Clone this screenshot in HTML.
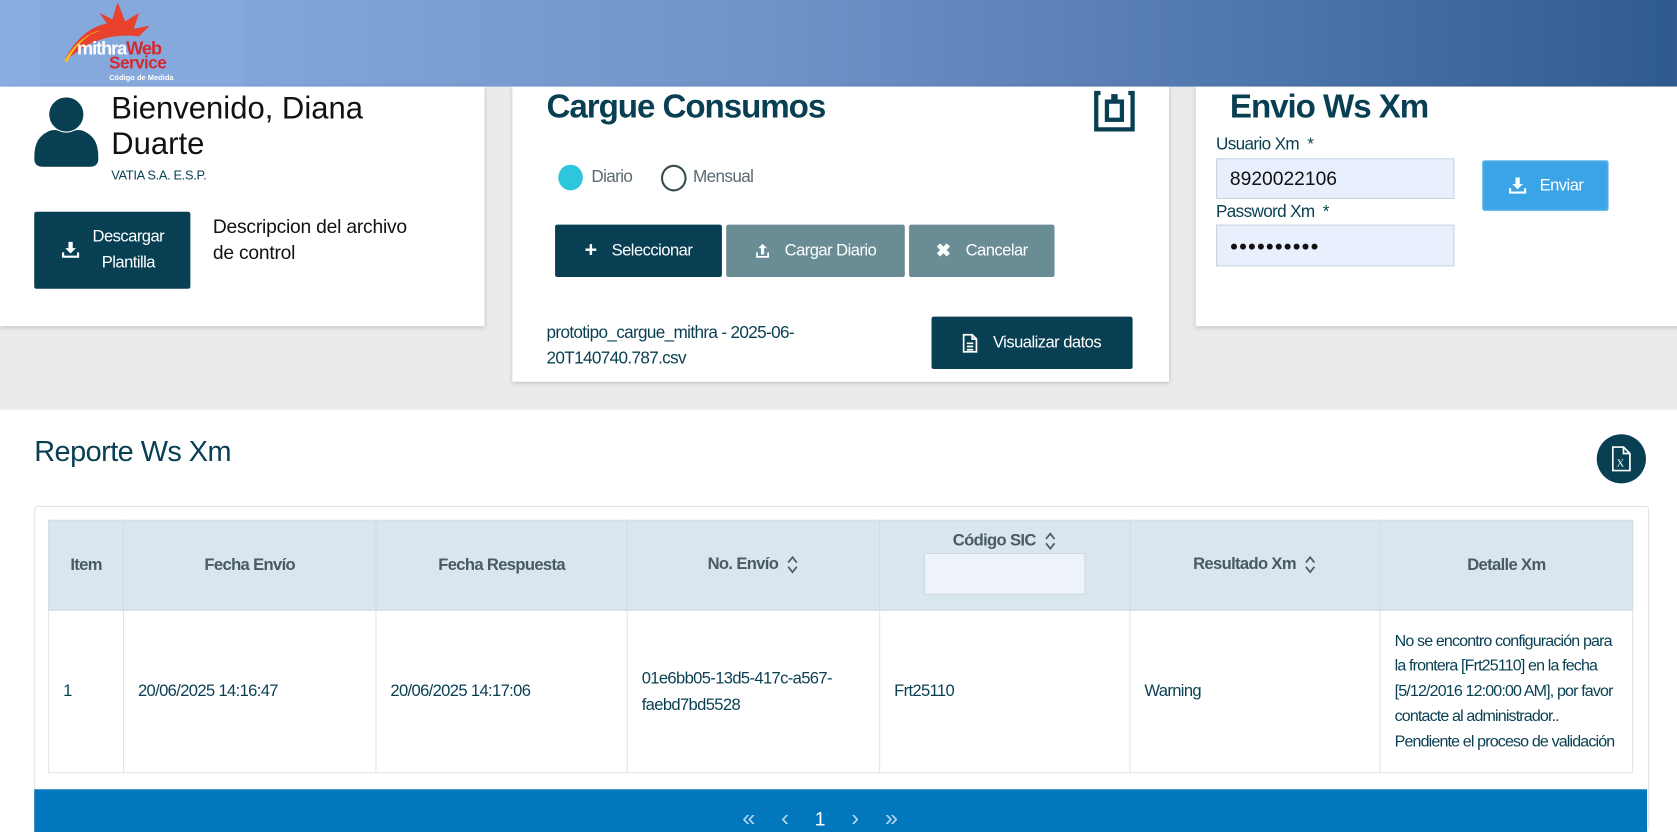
<!DOCTYPE html>
<html><head><meta charset="utf-8">
<style>
html,body{margin:0;padding:0;width:1677px;height:822px;overflow:hidden;background:#fff;}
#w{position:absolute;left:0;top:0;width:1568px;height:769px;transform:scale(1.0695);transform-origin:0 0;font-family:"Liberation Sans",sans-serif;}
.a{position:absolute;}
.n{letter-spacing:-0.6px;}
.card{position:absolute;background:#fff;box-shadow:0 1px 4px rgba(0,0,0,.2);}
.btn{position:absolute;color:#fff;font-size:15.5px;letter-spacing:-0.5px;display:flex;align-items:center;justify-content:center;border-radius:2px;}
.dk{background:#083f52;}
.gr{background:#6a8c95;}
table{border-collapse:collapse;position:absolute;left:45px;top:486px;width:1482px;table-layout:fixed;}
th{background:#dae6ee;color:#4a5a62;font-size:15.5px;letter-spacing:-0.6px;font-weight:bold;height:84px;padding:0;border:1px solid #cfdbe3;box-sizing:border-box;}
td{border:1px solid #dfe6ea;color:#083f52;font-size:15.5px;letter-spacing:-0.6px;height:152px;padding:0 13px;overflow:hidden;box-sizing:border-box;}
</style></head><body>
<div id="w">
<div class="a" style="left:0;top:81px;width:1568px;height:302px;background:#ebebeb"></div>
<div class="a" style="left:0;top:0;width:1568px;height:81px;background:linear-gradient(90deg,#89aee2 0%,#6f94c8 45%,#4f76ad 75%,#2f5a90 100%)"></div>
<div class="a" style="left:37px;top:0;width:190px;height:81px;background:#85a9dd"></div>
<svg class="a" style="left:55px;top:2px" width="130" height="60" viewBox="0 0 130 60">
<path d="M5 55 Q20 25 45 20 L38 10 L50 16 L55 0 L62 18 L75 10 L70 25 L85 22 L75 32 Q40 28 15 48 Z" fill="#e8412c"/>
<path d="M5 55 Q20 30 40 26 L30 30 Q15 40 8 56Z" fill="#f4c21b"/>
</svg>
<div class="a" style="left:72px;top:36px;font:bold 17px 'Liberation Sans',sans-serif;color:#fff;letter-spacing:-1px">mithra<span style="color:#d22a2f">Web</span></div>
<div class="a" style="left:102px;top:51px;font:bold 16px 'Liberation Sans',sans-serif;color:#d22a2f;letter-spacing:-0.5px">Service</div>
<div class="a" style="left:102px;top:70px;font:bold 7px 'Liberation Sans',sans-serif;color:#fff">Código de Medida</div>

<div class="card" style="left:0;top:81px;width:453px;height:224px"></div>
<svg class="a" style="left:32px;top:90px" width="60" height="66" viewBox="0 0 60 66"><circle cx="30" cy="17" r="16" fill="#083f52"/><path d="M6 38 Q14 30 22 32 Q30 36 38 32 Q46 30 54 38 Q60 44 60 58 Q60 66 52 66 L8 66 Q0 66 0 58 Q0 44 6 38Z" fill="#083f52"/></svg>
<div class="a" style="left:104px;top:86px;font-size:29px;line-height:33px;color:#111">Bienvenido, Diana<br>Duarte</div>
<div class="a" style="left:104px;top:157px;font-size:12px;color:#083f52;letter-spacing:-0.3px">VATIA S.A. E.S.P.</div>
<div class="btn dk" style="left:32px;top:198px;width:146px;height:72px;line-height:24px;text-align:center"><svg width="18" height="16" viewBox="0 0 18 16" style="margin-right:12px"><path d="M7 0h4v6h3l-5 5-5-5h3z M1 10v5h16v-5h-2v3H3v-3z" fill="#fff"/></svg><span>Descargar<br>Plantilla</span></div>
<div class="a" style="left:199px;top:200px;font-size:18px;line-height:24px;color:#111;letter-spacing:-0.2px">Descripcion del archivo<br>de control</div>

<div class="card" style="left:479px;top:81px;width:614px;height:276px"></div>
<div class="a" style="left:511px;top:82px;font-size:31px;font-weight:bold;color:#083f52;letter-spacing:-1px">Cargue Consumos</div>
<svg class="a" style="left:1022px;top:84px" width="40" height="40" viewBox="0 0 40 40"><path d="M7 3 H3 V37 H37 V3 H33" fill="none" stroke="#083f52" stroke-width="4"/><rect x="13" y="11" width="14" height="17" fill="none" stroke="#083f52" stroke-width="4"/><rect x="17" y="4" width="6" height="8" fill="#083f52"/></svg>
<div class="a" style="left:522px;top:154px;width:23px;height:24px;border-radius:50%;background:#2ec6dc"></div>
<div class="a n" style="left:553px;top:157px;font-size:16px;color:#5a6a72">Diario</div>
<div class="a" style="left:618px;top:154px;width:20px;height:21px;border-radius:50%;border:2px solid #3a4a52"></div>
<div class="a n" style="left:648px;top:157px;font-size:16px;color:#5a6a72">Mensual</div>
<div class="btn dk" style="left:519px;top:210px;width:156px;height:49px"><b style="font-size:20px;margin-right:14px">+</b>Seleccionar</div>
<div class="btn gr" style="left:679px;top:210px;width:167px;height:49px"><svg width="14" height="14" viewBox="0 0 14 14" style="margin-right:14px"><path d="M5.5 10V4H3l4-4 4 4H8.5v6z M1 8v5h12V8h-1.6v3.4H2.6V8z" fill="#fff"/></svg>Cargar Diario</div>
<div class="btn gr" style="left:850px;top:210px;width:136px;height:49px"><b style="font-size:17px;margin-right:14px">&#x2716;</b>Cancelar</div>
<div class="a n" style="left:511px;top:300px;font-size:16px;line-height:24px;color:#083f52">prototipo_cargue_mithra - 2025-06-<br>20T140740.787.csv</div>
<div class="btn dk" style="left:871px;top:296px;width:188px;height:49px"><svg width="14" height="18" viewBox="0 0 14 18" style="margin-right:14px"><path d="M1 1 H9 L13 5 V17 H1Z M9 1 V5 H13 M4 9 H10 M4 12 H10 M4 15 H10" fill="none" stroke="#fff" stroke-width="1.6"/></svg>Visualizar datos</div>

<div class="card" style="left:1118px;top:81px;width:460px;height:224px"></div>
<div class="a" style="left:1150px;top:82px;font-size:31px;font-weight:bold;color:#083f52;letter-spacing:-1px">Envio Ws Xm</div>
<div class="a n" style="left:1137px;top:127px;font-size:16px;color:#083f52">Usuario Xm &nbsp;*</div>
<div class="a" style="left:1137px;top:148px;width:221px;height:36px;background:#e8f0fe;border:1px solid #c9d3dc;font-size:18px;line-height:36px;text-indent:12px;color:#111">8920022106</div>
<div class="a n" style="left:1137px;top:190px;font-size:16px;color:#083f52">Password Xm &nbsp;*</div>
<div class="a" style="left:1137px;top:210px;width:221px;height:37px;background:#e8f0fe;border:1px solid #c9d3dc;font-size:13px;line-height:37px;text-indent:12px;color:#111;letter-spacing:0.5px">●●●●●●●●●●</div>
<div class="btn" style="left:1386px;top:150px;width:118px;height:47px;background:#3aa4e6;box-shadow:0 0 4px #6ab8ee inset"><svg width="18" height="16" viewBox="0 0 18 16" style="margin-right:12px"><path d="M7 0h4v6h3l-5 5-5-5h3z M1 10v5h16v-5h-2v3H3v-3z" fill="#fff"/></svg>Enviar</div>

<div class="a" style="left:32px;top:407px;font-size:27px;color:#083f52;letter-spacing:-0.5px">Reporte Ws Xm</div>
<div class="a" style="left:1493px;top:406px;width:46px;height:46px;border-radius:50%;background:#083f52"></div>
<svg class="a" style="left:1507px;top:417px" width="18" height="24" viewBox="0 0 18 24"><path d="M1 1 H11 L17 7 V23 H1Z M11 1 V7 H17" fill="none" stroke="#fff" stroke-width="1.6"/><text x="4.5" y="19" font-family="Liberation Serif" font-size="10" fill="#fff">X</text></svg>
<div class="a" style="left:32px;top:473px;width:1508px;height:300px;border:1px solid #e3e3e3;border-radius:3px"></div>
<table>
<colgroup><col style="width:70px"><col style="width:236px"><col style="width:235px"><col style="width:236px"><col style="width:234px"><col style="width:234px"><col></colgroup>
<tr><th>Item</th><th>Fecha Envío</th><th>Fecha Respuesta</th><th>No. Envío <svg width="12" height="18" viewBox="0 0 12 18" style="vertical-align:middle;margin-left:4px"><path d="M2 7 L6 2 L10 7 M2 11 L6 16 L10 11" fill="none" stroke="#4a5a62" stroke-width="1.6"/></svg></th><th style="vertical-align:top;padding-top:10px">Código SIC <svg width="12" height="18" viewBox="0 0 12 18" style="vertical-align:middle;margin-left:4px"><path d="M2 7 L6 2 L10 7 M2 11 L6 16 L10 11" fill="none" stroke="#4a5a62" stroke-width="1.6"/></svg><div style="margin:2px auto 0;width:149px;height:37px;background:#edf3f8;border:1px solid #cfd8e0"></div></th><th>Resultado Xm <svg width="12" height="18" viewBox="0 0 12 18" style="vertical-align:middle;margin-left:4px"><path d="M2 7 L6 2 L10 7 M2 11 L6 16 L10 11" fill="none" stroke="#4a5a62" stroke-width="1.6"/></svg></th><th>Detalle Xm</th></tr>
<tr><td>1</td><td>20/06/2025 14:16:47</td><td>20/06/2025 14:17:06</td><td style="line-height:25px">01e6bb05-13d5-417c-a567-<br>faebd7bd5528</td><td>Frt25110</td><td>Warning</td><td style="line-height:23.5px;font-size:15px;letter-spacing:-0.8px;padding-right:14px">No se encontro configuración para la frontera [Frt25110] en la fecha [5/12/2016 12:00:00 AM], por favor contacte al administrador.. Pendiente el proceso de validación</td></tr>
</table>
<div class="a" style="left:32px;top:738px;width:1508px;height:40px;background:#0277bd"></div>
<div class="a" style="left:694px;top:752px;font-size:22px;color:#b8d8ee;word-spacing:18px">« ‹ <span style="color:#fff;font-size:18px">1</span> › »</div>
</div>
</body></html>
